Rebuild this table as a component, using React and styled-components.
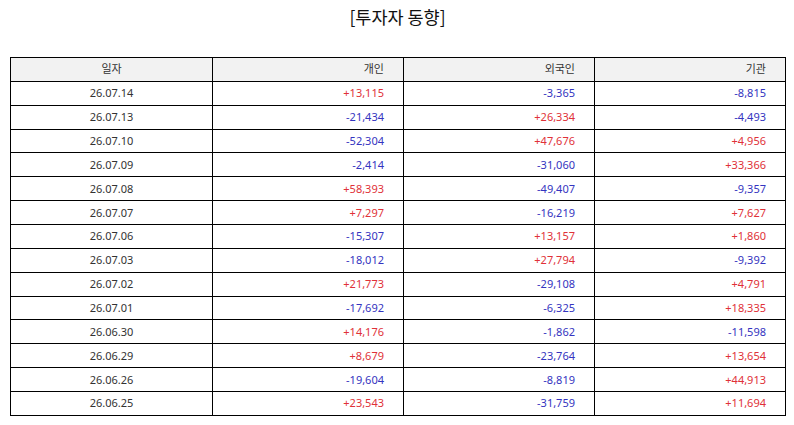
import React from 'react'
import styled, { createGlobalStyle } from 'styled-components'

const GlobalStyle = createGlobalStyle`
  html, body {
    margin: 0;
    padding: 0;
    background: #fff;
  }
  body {
    font-family: "Noto Sans", "Noto Sans CJK KR", sans-serif;
  }
`

const Page = styled.div`
  width: 794px;
  height: 425px;
  padding: 0 9px 0 10px;
  box-sizing: border-box;
`

const Title = styled.h1`
  margin: 0;
  height: 57px;
  padding-top: 5px;
  box-sizing: border-box;
  font-family: "Noto Sans CJK KR", sans-serif;
  font-size: 17.5px;
  font-weight: 400;
  line-height: 24px;
  text-align: center;
  color: #111;
`

const Table = styled.table`
  width: 775px;
  border-collapse: collapse;
  table-layout: fixed;
  font-size: 11px;
  color: #333;
`

const Row = styled.tr`
  height: 23.87px;
  background: ${p => (p.$head ? '#f2f2f2' : '#fff')};
`

const Cell = styled.td`
  border: 1px solid #000;
  padding: 0 ${p => (p.$center ? '0' : '19px')} 0 0;
  text-align: ${p => (p.$center ? 'center' : 'right')};
  line-height: 16px;
  color: ${p => (p.$tone === 'up' ? '#e03138' : p.$tone === 'down' ? '#3434c0' : '#333')};
`

const rows = [
  ['26.07.14', '+13,115', '-3,365', '-8,815'],
  ['26.07.13', '-21,434', '+26,334', '-4,493'],
  ['26.07.10', '-52,304', '+47,676', '+4,956'],
  ['26.07.09', '-2,414', '-31,060', '+33,366'],
  ['26.07.08', '+58,393', '-49,407', '-9,357'],
  ['26.07.07', '+7,297', '-16,219', '+7,627'],
  ['26.07.06', '-15,307', '+13,157', '+1,860'],
  ['26.07.03', '-18,012', '+27,794', '-9,392'],
  ['26.07.02', '+21,773', '-29,108', '+4,791'],
  ['26.07.01', '-17,692', '-6,325', '+18,335'],
  ['26.06.30', '+14,176', '-1,862', '-11,598'],
  ['26.06.29', '+8,679', '-23,764', '+13,654'],
  ['26.06.26', '-19,604', '-8,819', '+44,913'],
  ['26.06.25', '+23,543', '-31,759', '+11,694'],
]

const tone = v => (v.startsWith('+') ? 'up' : 'down')

export default function App() {
  return (
    <Page>
      <GlobalStyle />
      <Title>[투자자 동향]</Title>
      <Table>
        <colgroup>
          <col style={{ width: 202 }} />
          <col style={{ width: 191 }} />
          <col style={{ width: 191 }} />
          <col style={{ width: 191 }} />
        </colgroup>
        <thead>
          <Row $head>
            <Cell $center>일자</Cell>
            <Cell>개인</Cell>
            <Cell>외국인</Cell>
            <Cell>기관</Cell>
          </Row>
        </thead>
        <tbody>
          {rows.map(([date, person, foreign, inst]) => (
            <Row key={date}>
              <Cell $center>{date}</Cell>
              <Cell $tone={tone(person)}>{person}</Cell>
              <Cell $tone={tone(foreign)}>{foreign}</Cell>
              <Cell $tone={tone(inst)}>{inst}</Cell>
            </Row>
          ))}
        </tbody>
      </Table>
    </Page>
  )
}
